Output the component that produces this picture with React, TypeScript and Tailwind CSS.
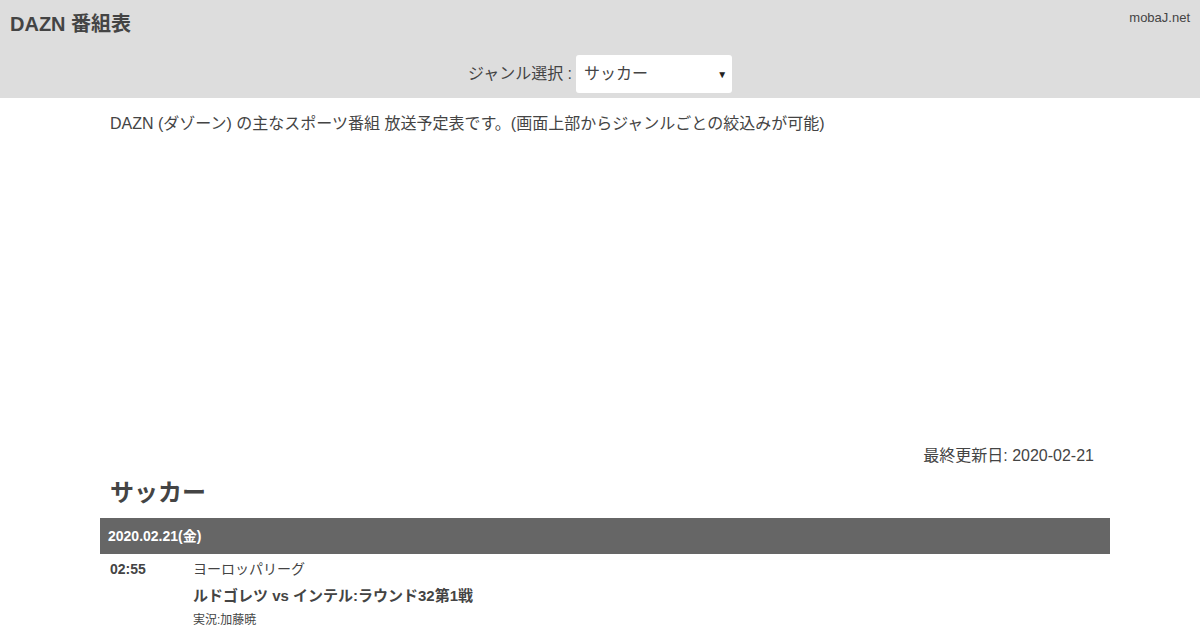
import React from "react";

export default function App() {
  return (
    <div className="min-h-[630px] bg-white text-[#444]" style={{ fontFamily: '"Liberation Sans", "Noto Sans CJK JP", sans-serif' }}>
      <header className="relative h-[98px] bg-[#dddddd]">
        <div className="pl-[10px] pt-[11px] text-[20px] font-bold leading-[26px]">DAZN 番組表</div>
        <div className="absolute right-[10px] top-[10px] text-[13px] leading-[16px]">mobaJ.net</div>
        <div className="mt-[18px] flex items-center justify-center">
          <span className="text-[16px] leading-[20px]">ジャンル選択 :</span>
          <div className="ml-[4px] flex h-[38px] w-[156px] items-center justify-between rounded-[3px] bg-white pl-[8px] pr-[5px]">
            <span className="text-[16px]">サッカー</span>
            <span className="text-[10px] text-[#222]">▼</span>
          </div>
        </div>
      </header>
      <main className="ml-[100px] w-[1010px]">
        <p className="px-[10px] pt-[16px] text-[16px] leading-[20px]">DAZN (ダゾーン) の主なスポーツ番組 放送予定表です。(画面上部からジャンルごとの絞込みが可能)</p>
        <div className="h-[312px]" />
        <div className="pr-[16px] text-right text-[16px] leading-[20px]">最終更新日: 2020-02-21</div>
        <h2 className="px-[10px] pt-[12px] text-[24px] font-bold leading-[30px]">サッカー</h2>
        <div className="mt-[10px] flex h-[36px] items-center bg-[#666666] px-[8px] text-[14px] font-bold text-white">2020.02.21(金)</div>
        <div className="flex px-[10px] pt-[6px]">
          <div className="w-[83px] text-[14px] font-bold leading-[18px]">02:55</div>
          <div>
            <div className="text-[14px] leading-[18px]">ヨーロッパリーグ</div>
            <div className="mt-[8px] text-[15px] font-bold leading-[20px]">ルドゴレツ vs インテル:ラウンド32第1戦</div>
            <div className="mt-[6px] text-[12px] leading-[16px]">実況:加藤暁</div>
          </div>
        </div>
      </main>
    </div>
  );
}
